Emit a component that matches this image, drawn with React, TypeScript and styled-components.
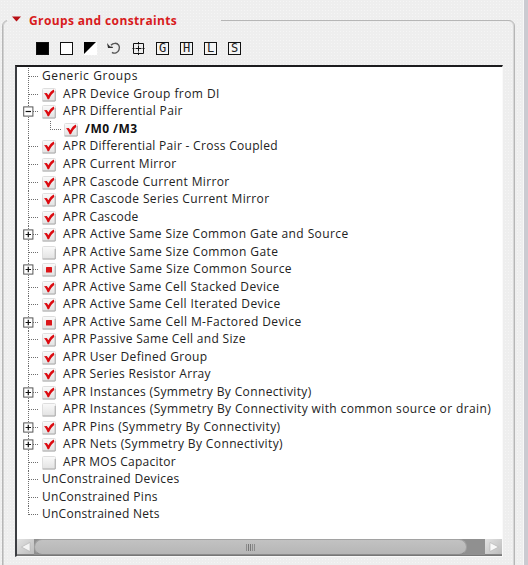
import React from "react";
import styled, { createGlobalStyle } from "styled-components";

const GlobalStyle = createGlobalStyle`
  *, *::before, *::after { box-sizing: border-box; }
  html, body { margin: 0; height: 100%; overflow: hidden; background: #cbcbd1; }
  body { font-family: "Open Sans", "Noto Sans", sans-serif; }
`;

const Panel = styled.main`
  width: 524px;
  height: 565px;
  padding: 12px 9px 0 2px;
  overflow: hidden;
  border-right: 1px solid #f8f8f8;
  background-color: #eeeeee;
  background-image: radial-gradient(circle, #f5f5f5 0.6px, transparent 1px);
  background-size: 3px 3px;
  background-position: 0 12px;
`;

const Group = styled.fieldset`
  width: 513px;
  height: 580px;
  margin: 0;
  padding: 0;
  border: 1px solid #b6b6b6;
  border-radius: 6px;
  box-shadow: inset -1px 0 0 #d6d6d6, inset 1px 0 0 #d0d0d0;
`;

const Title = styled.legend`
  display: flex;
  align-items: center;
  gap: 8px;
  width: 214px;
  height: 17px;
  margin-left: 4px;
  padding-left: 5px;
  color: #d81b20;
  font-size: 12px;
  line-height: 17px;
  font-weight: 700;
  letter-spacing: 0.37px;
  white-space: nowrap;
`;

const Arrow = styled.svg`
  display: block;
  width: 9px;
  height: 6px;
  margin-top: -3px;
`;

const Toolbar = styled.div`
  display: flex;
  gap: 11px;
  height: 13px;
  margin: 13px 0 0 33px;
`;

const Swatch = styled.span<{ $fill: string }>`
  width: 13px;
  height: 13px;
  background: ${(p) => p.$fill};
  border: 1px solid #111111;
`;

const ToolIcon = styled.svg`
  display: block;
  width: 13px;
  height: 13px;
  overflow: visible;
`;

const LetterTool = styled.span`
  display: flex;
  align-items: center;
  justify-content: center;
  width: 13px;
  height: 13px;
  border: 1px solid #111111;
  background: #f4f4f4;
  color: #222222;
  font: 12px/11px "DejaVu Sans Mono", monospace;
`;

const Tree = styled.section`
  display: flex;
  flex-direction: column;
  width: 488px;
  height: 492px;
  margin: 10px 0 0 12px;
  padding-top: 1px;
  border-style: solid;
  border-width: 2px 1px 1px 2px;
  border-color: #1c1c1e #fafafa #fafafa #3c3e42;
  background: #ffffff;
`;

const Rows = styled.div`
  flex: 1;
`;

const Row = styled.div<{ $height: number }>`
  display: flex;
  align-items: flex-start;
  height: ${(p) => p.$height}px;
  padding-left: 5px;
`;

const Guides = styled.svg<{ $width: number }>`
  display: block;
  flex: none;
  width: ${(p) => p.$width}px;
  height: 18px;
`;

const CheckBox = styled.svg`
  display: block;
  flex: none;
  width: 14px;
  height: 15px;
  margin: 1px 7px 0 0;
`;

const Label = styled.span<{ $bold?: boolean; $gap: number }>`
  color: ${(p) => (p.$bold ? "#111111" : "#222222")};
  font-size: 12px;
  line-height: 15px;
  font-weight: ${(p) => (p.$bold ? 700 : 400)};
  letter-spacing: ${(p) => p.$gap}px;
  white-space: nowrap;
`;

const ScrollBar = styled.div`
  display: flex;
  height: 17px;
  background: #909090;
  border-bottom: 1px solid #777777;
`;

const ScrollButton = styled.div`
  display: flex;
  align-items: center;
  justify-content: center;
  width: 17px;
  border-bottom: 1px solid #858585;
  background: linear-gradient(135deg, #e2e2e2, #bcbcbc);
`;

const Track = styled.div`
  flex: 1;
  background: #909090;
`;

const Thumb = styled.div`
  display: flex;
  align-items: center;
  justify-content: center;
  gap: 1px;
  width: 433px;
  height: 16px;
  border: 1px solid #a2a2a2;
  border-bottom-color: #8c8c8c;
  border-radius: 8px;
  background: linear-gradient(#c2c2c2, #b6b6b6);
`;

const Grip = styled.i<{ $tone: string }>`
  width: 1px;
  height: 7px;
  background: ${(p) => p.$tone};
`;

type State = "on" | "off" | "partial";

interface Item {
  text: string;
  gap: number;
  state?: State;
  node?: "plus" | "minus";
  child?: boolean;
}

const items: Item[] = [
  { text: "Generic Groups", gap: 0.6 },
  { text: "APR Device Group from DI", gap: 0.43, state: "on" },
  { text: "APR Differential Pair", gap: 0.33, state: "on", node: "minus" },
  { text: "/M0 /M3", gap: 0.45, state: "on", child: true },
  { text: "APR Differential Pair - Cross Coupled", gap: 0.3, state: "on" },
  { text: "APR Current Mirror", gap: 0.35, state: "on" },
  { text: "APR Cascode Current Mirror", gap: 0.35, state: "on" },
  { text: "APR Cascode Series Current Mirror", gap: 0.37, state: "on" },
  { text: "APR Cascode", gap: 0.3, state: "on" },
  { text: "APR Active Same Size Common Gate and Source", gap: 0.4, state: "on", node: "plus" },
  { text: "APR Active Same Size Common Gate", gap: 0.41, state: "off" },
  { text: "APR Active Same Size Common Source", gap: 0.43, state: "partial", node: "plus" },
  { text: "APR Active Same Cell Stacked Device", gap: 0.38, state: "on" },
  { text: "APR Active Same Cell Iterated Device", gap: 0.38, state: "on" },
  { text: "APR Active Same Cell M-Factored Device", gap: 0.4, state: "partial", node: "plus" },
  { text: "APR Passive Same Cell and Size", gap: 0.3, state: "on" },
  { text: "APR User Defined Group", gap: 0.33, state: "on" },
  { text: "APR Series Resistor Array", gap: 0.3, state: "on" },
  { text: "APR Instances (Symmetry By Connectivity)", gap: 0.37, state: "on", node: "plus" },
  { text: "APR Instances (Symmetry By Connectivity with common source or drain)", gap: 0.38, state: "off" },
  { text: "APR Pins (Symmetry By Connectivity)", gap: 0.38, state: "on", node: "plus" },
  { text: "APR Nets (Symmetry By Connectivity)", gap: 0.38, state: "on", node: "plus" },
  { text: "APR MOS Capacitor", gap: 0.25, state: "off" },
  { text: "UnConstrained Devices", gap: 0.36 },
  { text: "UnConstrained Pins", gap: 0.28 },
  { text: "UnConstrained Nets", gap: 0.25 },
];

const PITCH = 17.52;
const rowTop = (i: number) => Math.round(PITCH * i + 0.4);
const rowHeight = (i: number) => rowTop(i + 1) - rowTop(i);

function TreeGuides({ item, last }: { item: Item; last: boolean }) {
  const dots = { stroke: "#6e6e6e", strokeDasharray: "1 1" };
  return (
    <Guides $width={item.child ? 42 : 20}>
      <line x1="6.5" y1="0" x2="6.5" y2={last ? 9 : 18} {...dots} />
      {item.child ? (
        <>
          <line x1="28.5" y1="0" x2="28.5" y2="8" {...dots} />
          <line x1="28" y1="8.5" x2="39" y2="8.5" {...dots} />
        </>
      ) : (
        <line x1="7" y1="8.5" x2="17" y2="8.5" {...dots} />
      )}
      {item.node && (
        <>
          <rect x="1.7" y="3.9" width="9.2" height="9.2" fill="#ffffff" stroke="#555555" />
          <path d={item.node === "plus" ? "M3.6 8.5H9M6.3 5.8V11.2" : "M3.6 8.5H9"} stroke="#111111" strokeWidth="1.2" />
        </>
      )}
    </Guides>
  );
}

function Check({ state }: { state: State }) {
  return (
    <CheckBox viewBox="0 0 14 15">
      <defs>
        <linearGradient id="face" x1="0" y1="0" x2="0" y2="1">
          <stop offset="0" stopColor="#fafafa" />
          <stop offset="1" stopColor="#e2e2e2" />
        </linearGradient>
      </defs>
      <rect x="0.5" y="1.5" width="13" height="12.5" rx="1" fill="url(#face)" stroke="#dedede" />
      <path d="M0.5 14H13.2V4" fill="none" stroke="#aaaaaa" />
      {state === "on" && <path d="M2 6.2L4.8 6L6.4 8.2C7.6 5.8 9.4 3.8 12 2.6L12.2 5C10 6.8 8.4 9 7 12.2H5.6C4.8 9.8 3.6 7.8 2 6.2Z" fill="#dc0a10" />}
      {state === "partial" && <rect x="4" y="5" width="6" height="5.5" rx="0.5" fill="#dc1519" />}
    </CheckBox>
  );
}

export default function App() {
  return (
    <>
      <GlobalStyle />
      <Panel>
        <Group>
          <Title>
            <Arrow viewBox="0 0 9 6"><path d="M0 0.5H9L4.5 5.5Z" fill="#b80f14" /></Arrow>
            Groups and constraints
          </Title>
          <Toolbar>
            <Swatch $fill="#000000" />
            <Swatch $fill="#ffffff" />
            <ToolIcon viewBox="0 0 13 13">
              <path d="M0 0H13V13H0Z" fill="#ffffff" />
              <path d="M0 0H12L0 12Z" fill="#000000" />
            </ToolIcon>
            <ToolIcon viewBox="0 0 13 13">
              <path d="M3 3.2C5 0.8 9 0.6 10.7 3.2C12.4 6 10.8 9.8 8 10.8C6.5 11.3 5 11.1 4 10.4" fill="none" stroke="#555555" strokeWidth="1.4" />
              <path d="M-1 1L0 6H5L4.6 4.7L2 4.4Z" fill="#333333" />
            </ToolIcon>
            <ToolIcon viewBox="0 0 13 13">
              <path d="M1.5 1.5H11.5V11.5H1.5ZM6.5 0V2.5M6.5 10.5V13M0.5 6.5H2.5M10.5 6.5H12.5M3.5 6.5H9.5M6.5 3.5V9.5" fill="none" stroke="#111111" />
            </ToolIcon>
            <LetterTool>G</LetterTool>
            <LetterTool>H</LetterTool>
            <LetterTool>L</LetterTool>
            <LetterTool>S</LetterTool>
          </Toolbar>
          <Tree>
            <Rows>
              {items.map((item, i) => (
                <Row key={item.text} $height={rowHeight(i)}>
                  <TreeGuides item={item} last={i === items.length - 1} />
                  {item.state && <Check state={item.state} />}
                  <Label $bold={item.child} $gap={item.gap}>{item.text}</Label>
                </Row>
              ))}
            </Rows>
            <ScrollBar>
              <ScrollButton>
                <svg width="10" height="10"><path d="M9 0.5V9.5L0.5 5Z" fill="#f4f4f4" stroke="#a8a8a8" strokeWidth="0.5" /></svg>
              </ScrollButton>
              <Thumb>
                {["#8c8c8c", "#777777", "#777777", "#8c8c8c", "#8c8c8c"].map((tone, i) => (
                  <Grip key={i} $tone={tone} />
                ))}
              </Thumb>
              <Track />
              <ScrollButton>
                <svg width="10" height="10"><path d="M1 0.5V9.5L9.5 5Z" fill="#f8f8f8" stroke="#a8a8a8" strokeWidth="0.5" /></svg>
              </ScrollButton>
            </ScrollBar>
          </Tree>
        </Group>
      </Panel>
    </>
  );
}
